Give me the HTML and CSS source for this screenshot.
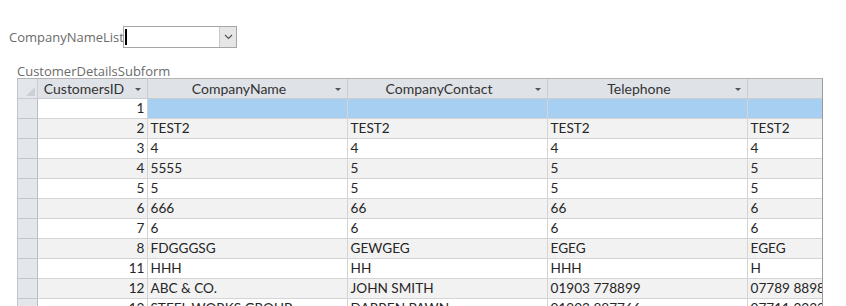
FILE: index.html
```html
<!DOCTYPE html>
<html lang="en">
<head>
  <meta charset="UTF-8">
  <title>Customers</title>
  <link rel="stylesheet" href="styles.css">
</head>
<body>
  <div class="form-row">
    <label class="form-label" for="companyList">CompanyNameList</label>
    <div class="combo">
      <span class="combo-text"><span class="caret"></span></span>
      <span class="combo-btn">
        <svg width="9" height="6" viewBox="0 0 9 6"><path d="M1 1 L4.5 4.5 L8 1" fill="none" stroke="#555" stroke-width="1.2"/></svg>
      </span>
    </div>
  </div>

  <div class="subform-label">CustomerDetailsSubform</div>
  <div class="subform">
    <table class="sheet">
      <colgroup>
        <col class="c-sel"><col class="c-id"><col class="c-wide"><col class="c-wide"><col class="c-wide"><col class="c-wide">
      </colgroup>
      <thead>
        <tr>
          <th class="corner"><span class="corner-mark"></span></th>
          <th><span class="hd">CustomersID</span><span class="arrow"></span></th>
          <th><span class="hd">CompanyName</span><span class="arrow"></span></th>
          <th><span class="hd">CompanyContact</span><span class="arrow"></span></th>
          <th><span class="hd">Telephone</span><span class="arrow"></span></th>
          <th></th>
        </tr>
      </thead>
      <tbody>
        <tr class="current"><td class="sel"></td><td class="num focus">1</td><td></td><td></td><td></td><td></td></tr>
        <tr><td class="sel"></td><td class="num">2</td><td>TEST2</td><td>TEST2</td><td>TEST2</td><td>TEST2</td></tr>
        <tr><td class="sel"></td><td class="num">3</td><td>4</td><td>4</td><td>4</td><td>4</td></tr>
        <tr><td class="sel"></td><td class="num">4</td><td>5555</td><td>5</td><td>5</td><td>5</td></tr>
        <tr><td class="sel"></td><td class="num">5</td><td>5</td><td>5</td><td>5</td><td>5</td></tr>
        <tr><td class="sel"></td><td class="num">6</td><td>666</td><td>66</td><td>66</td><td>6</td></tr>
        <tr><td class="sel"></td><td class="num">7</td><td>6</td><td>6</td><td>6</td><td>6</td></tr>
        <tr><td class="sel"></td><td class="num">8</td><td>FDGGGSG</td><td>GEWGEG</td><td>EGEG</td><td>EGEG</td></tr>
        <tr><td class="sel"></td><td class="num">11</td><td>HHH</td><td>HH</td><td>HHH</td><td>H</td></tr>
        <tr><td class="sel"></td><td class="num">12</td><td>ABC &amp; CO.</td><td>JOHN SMITH</td><td>01903 778899</td><td>07789 889888</td></tr>
        <tr><td class="sel"></td><td class="num">13</td><td>STEEL WORKS GROUP</td><td>DARREN PAWN</td><td>01903 887766</td><td>07711 223344</td></tr>
      </tbody>
    </table>
  </div>
</body>
</html>
```

FILE: styles.css
```css
body {
  margin: 0;
  background-color: #fff;
  font-family: "Open Sans", "Noto Sans", sans-serif;
  overflow: hidden;
}

.form-row {
  display: flex;
  align-items: center;
  padding: 26px 0 0 9px;
  height: 22px;
}

.form-label {
  font-size: 13px;
  color: #6b6b6b;
  width: 114px;
  white-space: nowrap;
  overflow: hidden;
}

.combo {
  display: flex;
  width: 112px;
  height: 20px;
  border: 1px solid #a6a6a6;
  background-color: #fff;
}

.combo-text {
  flex: 1;
  display: flex;
  align-items: center;
  padding-left: 1px;
}

.caret {
  width: 2px;
  height: 16px;
  background-color: #000;
}

.combo-btn {
  width: 16px;
  display: flex;
  align-items: center;
  justify-content: center;
  background-color: #e6e6e6;
  border-left: 1px solid #c8c8c8;
}

.subform-label {
  margin: 17px 0 0 17px;
  font-size: 13px;
  line-height: 13px;
  color: #6b6b6b;
}

.subform {
  margin-left: 17px;
  width: 804px;
  height: 240px;
  overflow: hidden;
  border-top: 1px solid #b4b4b4;
  border-left: 1px solid #c4c4c4;
  border-right: 1px solid #9a9a9a;
}

.sheet {
  border-collapse: collapse;
  table-layout: fixed;
  width: 929px;
  font-family: Lato, "Liberation Sans", sans-serif;
  font-size: 13.6px;
  color: #262626;
}

.c-sel { width: 19px; }
.c-id { width: 110px; }
.c-wide { width: 200px; }

.sheet th {
  height: 19px;
  padding: 0;
  background-color: #dfe2e7;
  border-right: 1px solid #c9ccd1;
  border-bottom: 1px solid #c9ccd1;
  font-weight: normal;
  font-size: 14px;
  color: #333;
  position: relative;
  text-align: center;
}

.hd {
  display: inline-block;
  padding-right: 16px;
}

.arrow {
  position: absolute;
  right: 6px;
  top: 9px;
  border-left: 3px solid transparent;
  border-right: 3px solid transparent;
  border-top: 3px solid #555;
}

.sheet th.corner {
  background-color: #e3e6ea;
}

.corner-mark {
  position: absolute;
  right: 2px;
  bottom: 2px;
  width: 0;
  height: 0;
  border-left: 9px solid transparent;
  border-bottom: 9px solid #ccd0d5;
}

.sheet td {
  height: 19px;
  padding: 0 3px;
  border-right: 1px solid #d4d4d4;
  border-bottom: 1px solid #d4d4d4;
  white-space: nowrap;
  overflow: hidden;
  line-height: 19px;
}

.sheet tbody tr:nth-child(even) td {
  background-color: #f2f2f2;
}

.sheet td.sel {
  background-color: #e3e6ea;
  border-right: 1px solid #b9bdc2;
  border-bottom: 1px solid #c3c6cb;
  padding: 0;
}

.sheet tbody tr:nth-child(even) td.sel {
  background-color: #e3e6ea;
}

.sheet td.num {
  text-align: right;
  padding-right: 2px;
}

.sheet tr.current td {
  background-color: #a7cff2;
}

.sheet tr.current td.sel {
  background-color: #e3e6ea;
}

.sheet tr.current td.focus {
  background-color: #fff;
}
```
